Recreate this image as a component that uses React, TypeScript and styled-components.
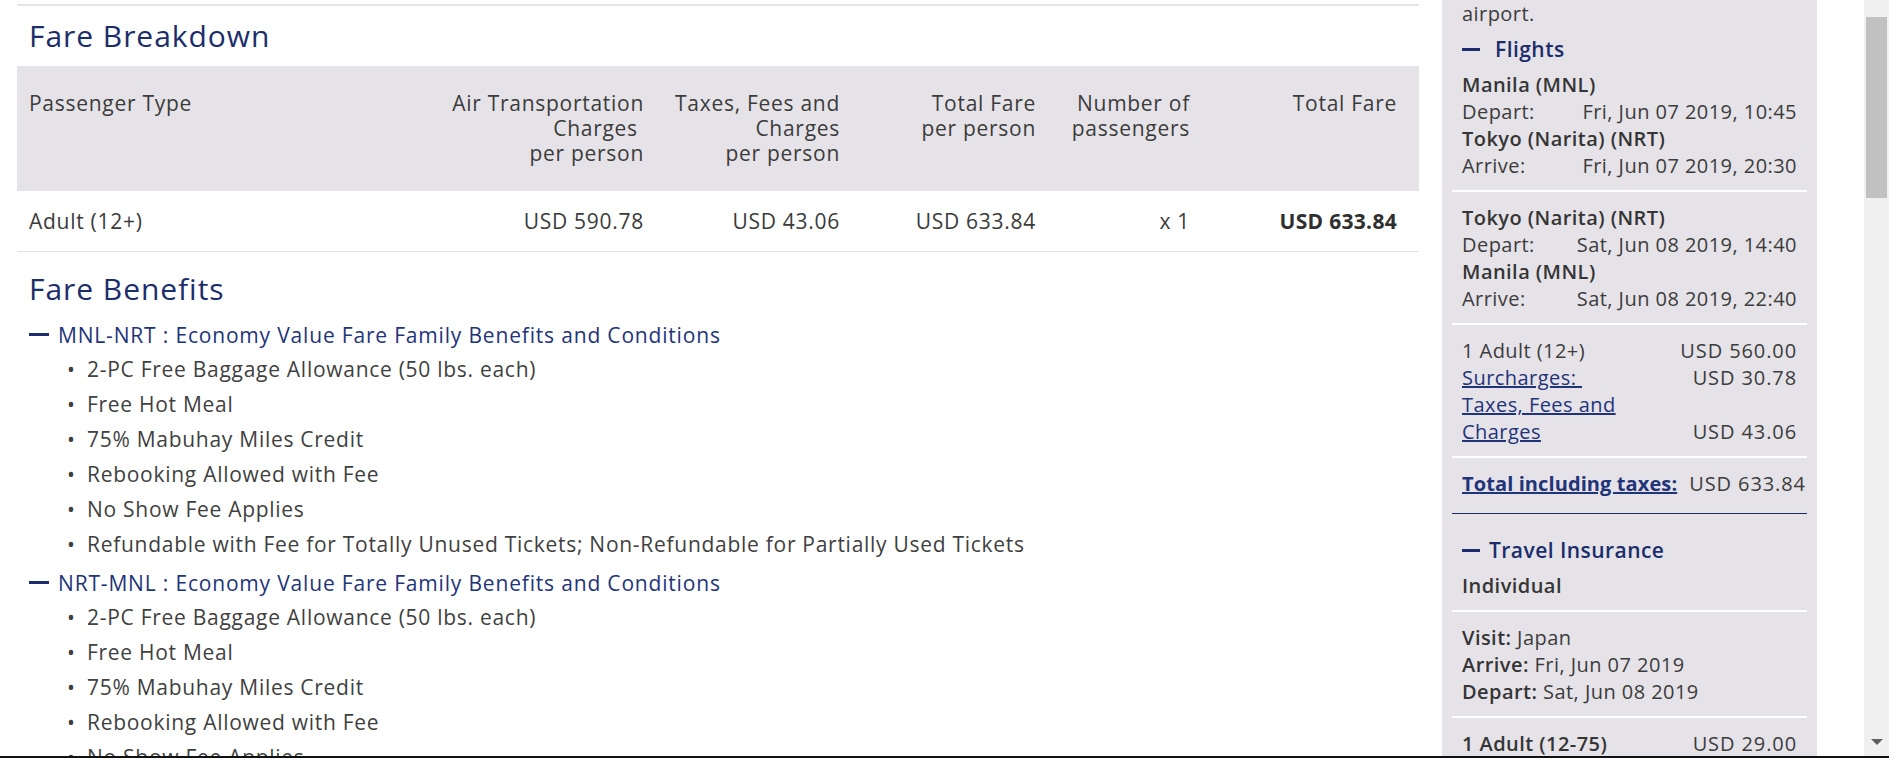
import React from "react";
import styled, { createGlobalStyle } from "styled-components";

const GlobalStyle = createGlobalStyle`
  html, body {
    margin: 0;
    padding: 0;
    height: 100%;
    overflow: hidden;
    background: #ffffff;
  }
  body {
    font-family: "Open Sans", "Noto Sans", "Liberation Sans", sans-serif;
    color: #3b3b3b;
  }
  #root { height: 100%; }
`;

const Page = styled.div`
  display: flex;
  align-items: stretch;
  height: 758px;
  overflow: hidden;
`;

const Main = styled.main`
  flex: none;
  width: 1402px;
  margin-left: 17px;
  margin-top: 4px;
  border-top: 2px solid #e6e6e6;
  font-size: 21px;
  letter-spacing: 0.72px;
`;

const SectionTitle = styled.h2<{ $top: number; $bottom: number }>`
  margin: 0;
  padding: ${(p) => p.$top}px 12px ${(p) => p.$bottom}px;
  font-size: 30px;
  line-height: 36px;
  font-weight: 400;
  letter-spacing: 0.95px;
  color: #1c2d6b;
`;

const GridRow = styled.div`
  display: grid;
  grid-template-columns: 1fr 200px 196px 196px 154px 207px;
  padding-left: 12px;
  padding-right: 22px;
  line-height: 25px;
`;

const HeadRow = styled(GridRow)`
  background: #e6e3e8;
  padding-top: 25px;
  padding-bottom: 25px;
`;

const BodyRow = styled(GridRow)`
  padding-top: 18px;
  padding-bottom: 17px;
  border-bottom: 1px solid #e4e4e4;
`;

const Cell = styled.div<{ $right?: boolean; $bold?: boolean }>`
  text-align: ${(p) => (p.$right ? "right" : "left")};
  font-weight: ${(p) => (p.$bold ? 700 : 400)};
  color: ${(p) => (p.$bold ? "#2f2f2f" : "#3b3b3b")};
  letter-spacing: ${(p) => (p.$bold ? "0.3px" : "inherit")};
  white-space: nowrap;
`;

const Group = styled.section<{ $gap: number }>`
  margin-top: ${(p) => p.$gap}px;
`;

const GroupHeader = styled.div`
  display: flex;
  align-items: center;
  height: 35px;
  padding-left: 12px;
  color: #1f3479;
  letter-spacing: 0.82px;
  white-space: nowrap;
`;

const Dash = styled.span<{ $gap: number; $w: number }>`
  flex: none;
  width: ${(p) => p.$w}px;
  height: 3px;
  background: #1c2d6b;
  margin-right: ${(p) => p.$gap}px;
`;

const List = styled.ul`
  list-style: none;
  margin: 0;
  padding: 0 0 0 50px;
`;

const Item = styled.li`
  display: flex;
  line-height: 35px;
  color: #3f3f3f;
  white-space: nowrap;
  &::before {
    content: "•";
    flex: none;
    width: 20px;
  }
`;

const Sidebar = styled.aside`
  flex: none;
  width: 375px;
  margin-left: 23px;
  box-sizing: border-box;
  padding: 0 20px;
  background: #e5e2e8;
  font-size: 20px;
  line-height: 27px;
  letter-spacing: 0.45px;
  color: #3c3c3c;
  overflow: hidden;
`;

const SideInner = styled.div`
  margin-top: -27px;
`;

const Line = styled.div`
  white-space: nowrap;
`;

const Strong = styled.span`
  font-weight: 600;
  color: #353535;
`;

const Row = styled.div<{ $end?: boolean }>`
  display: flex;
  justify-content: space-between;
  align-items: ${(p) => (p.$end ? "flex-end" : "baseline")};
  gap: 12px;
  white-space: nowrap;
`;

const Amount = styled.span`
  letter-spacing: 0.9px;
`;

const SideLink = styled.a<{ $bold?: boolean; $narrow?: boolean }>`
  color: #1f3479;
  text-decoration: underline;
  font-weight: ${(p) => (p.$bold ? 700 : 400)};
  letter-spacing: ${(p) => (p.$bold ? "0.1px" : "inherit")};
  max-width: ${(p) => (p.$narrow ? "170px" : "none")};
  white-space: ${(p) => (p.$narrow ? "normal" : "nowrap")};
  cursor: pointer;
`;

const Divider = styled.div<{ $navy?: boolean }>`
  height: ${(p) => (p.$navy ? 1 : 2)}px;
  background: ${(p) => (p.$navy ? "#1c2d6b" : "#ffffff")};
  margin: ${(p) => (p.$navy ? "16px -10px 14px" : "11px -10px 12px")};
`;

const SideHeader = styled.div`
  display: flex;
  align-items: center;
  height: 44px;
  font-size: 21px;
  font-weight: 600;
  color: #1c2d6b;
`;

const Scrollbar = styled.div`
  flex: none;
  width: 25px;
  margin-left: auto;
  box-sizing: border-box;
  padding: 17px 0 13px;
  background: #f0f0f0;
  display: flex;
  flex-direction: column;
  align-items: center;
`;

const Thumb = styled.div`
  width: 21px;
  height: 181px;
  background: #c1c1c1;
`;

const ArrowDown = styled.div`
  margin-top: auto;
  width: 0;
  height: 0;
  border-left: 6px solid transparent;
  border-right: 6px solid transparent;
  border-top: 6px solid #606060;
`;

const BottomEdge = styled.div`
  position: fixed;
  left: 0;
  right: 0;
  bottom: 0;
  height: 2px;
  background: #111111;
`;

const benefits = [
  "2-PC Free Baggage Allowance (50 lbs. each)",
  "Free Hot Meal",
  "75% Mabuhay Miles Credit",
  "Rebooking Allowed with Fee",
  "No Show Fee Applies",
  "Refundable with Fee for Totally Unused Tickets; Non-Refundable for Partially Used Tickets",
];

const groups = [
  { route: "MNL-NRT", gap: 0 },
  { route: "NRT-MNL", gap: 3 },
];

export default function App() {
  return (
    <>
      <GlobalStyle />
      <Page>
        <Main>
          <SectionTitle $top={12} $bottom={12}>Fare Breakdown</SectionTitle>
          <HeadRow>
            <Cell>Passenger Type</Cell>
            <Cell $right>
              Air Transportation
              <br />
              Charges&nbsp;
              <br />
              per person
            </Cell>
            <Cell $right>
              Taxes, Fees and
              <br />
              Charges
              <br />
              per person
            </Cell>
            <Cell $right>
              Total Fare
              <br />
              per person
            </Cell>
            <Cell $right>
              Number of
              <br />
              passengers
            </Cell>
            <Cell $right>Total Fare</Cell>
          </HeadRow>
          <BodyRow>
            <Cell>Adult (12+)</Cell>
            <Cell $right>USD 590.78</Cell>
            <Cell $right>USD 43.06</Cell>
            <Cell $right>USD 633.84</Cell>
            <Cell $right>x 1</Cell>
            <Cell $right $bold>USD 633.84</Cell>
          </BodyRow>

          <SectionTitle $top={19} $bottom={10}>Fare Benefits</SectionTitle>
          {groups.map((g) => (
            <Group key={g.route} $gap={g.gap}>
              <GroupHeader>
                <Dash $w={20} $gap={9} />
                {g.route} : Economy Value Fare Family Benefits and Conditions
              </GroupHeader>
              <List>
                {benefits.map((b) => (
                  <Item key={b}>{b}</Item>
                ))}
              </List>
            </Group>
          ))}
        </Main>

        <Sidebar>
          <SideInner>
            <Line>High time to be at the</Line>
            <Line>airport.</Line>
            <SideHeader>
              <Dash $w={18} $gap={15} />
              Flights
            </SideHeader>
            <Line><Strong>Manila (MNL)</Strong></Line>
            <Row><span>Depart:</span><span>Fri, Jun 07 2019, 10:45</span></Row>
            <Line><Strong>Tokyo (Narita) (NRT)</Strong></Line>
            <Row><span>Arrive:</span><span>Fri, Jun 07 2019, 20:30</span></Row>
            <Divider />
            <Line><Strong>Tokyo (Narita) (NRT)</Strong></Line>
            <Row><span>Depart:</span><span>Sat, Jun 08 2019, 14:40</span></Row>
            <Line><Strong>Manila (MNL)</Strong></Line>
            <Row><span>Arrive:</span><span>Sat, Jun 08 2019, 22:40</span></Row>
            <Divider />
            <Row><span>1 Adult (12+)</span><Amount>USD 560.00</Amount></Row>
            <Row><SideLink>Surcharges:&nbsp;</SideLink><Amount>USD 30.78</Amount></Row>
            <Row $end><SideLink $narrow>Taxes, Fees and Charges</SideLink><Amount>USD 43.06</Amount></Row>
            <Divider />
            <Row><SideLink $bold>Total including taxes:</SideLink><Amount>USD 633.84</Amount></Row>
            <Divider $navy />
            <SideHeader>
              <Dash $w={18} $gap={9} />
              Travel Insurance
            </SideHeader>
            <Line><Strong>Individual</Strong></Line>
            <Divider />
            <Line><Strong>Visit:</Strong> Japan</Line>
            <Line><Strong>Arrive:</Strong> Fri, Jun 07 2019</Line>
            <Line><Strong>Depart:</Strong> Sat, Jun 08 2019</Line>
            <Divider />
            <Row><Strong>1 Adult (12-75)</Strong><Amount>USD 29.00</Amount></Row>
          </SideInner>
        </Sidebar>

        <Scrollbar>
          <Thumb />
          <ArrowDown />
        </Scrollbar>
      </Page>
      <BottomEdge />
    </>
  );
}
